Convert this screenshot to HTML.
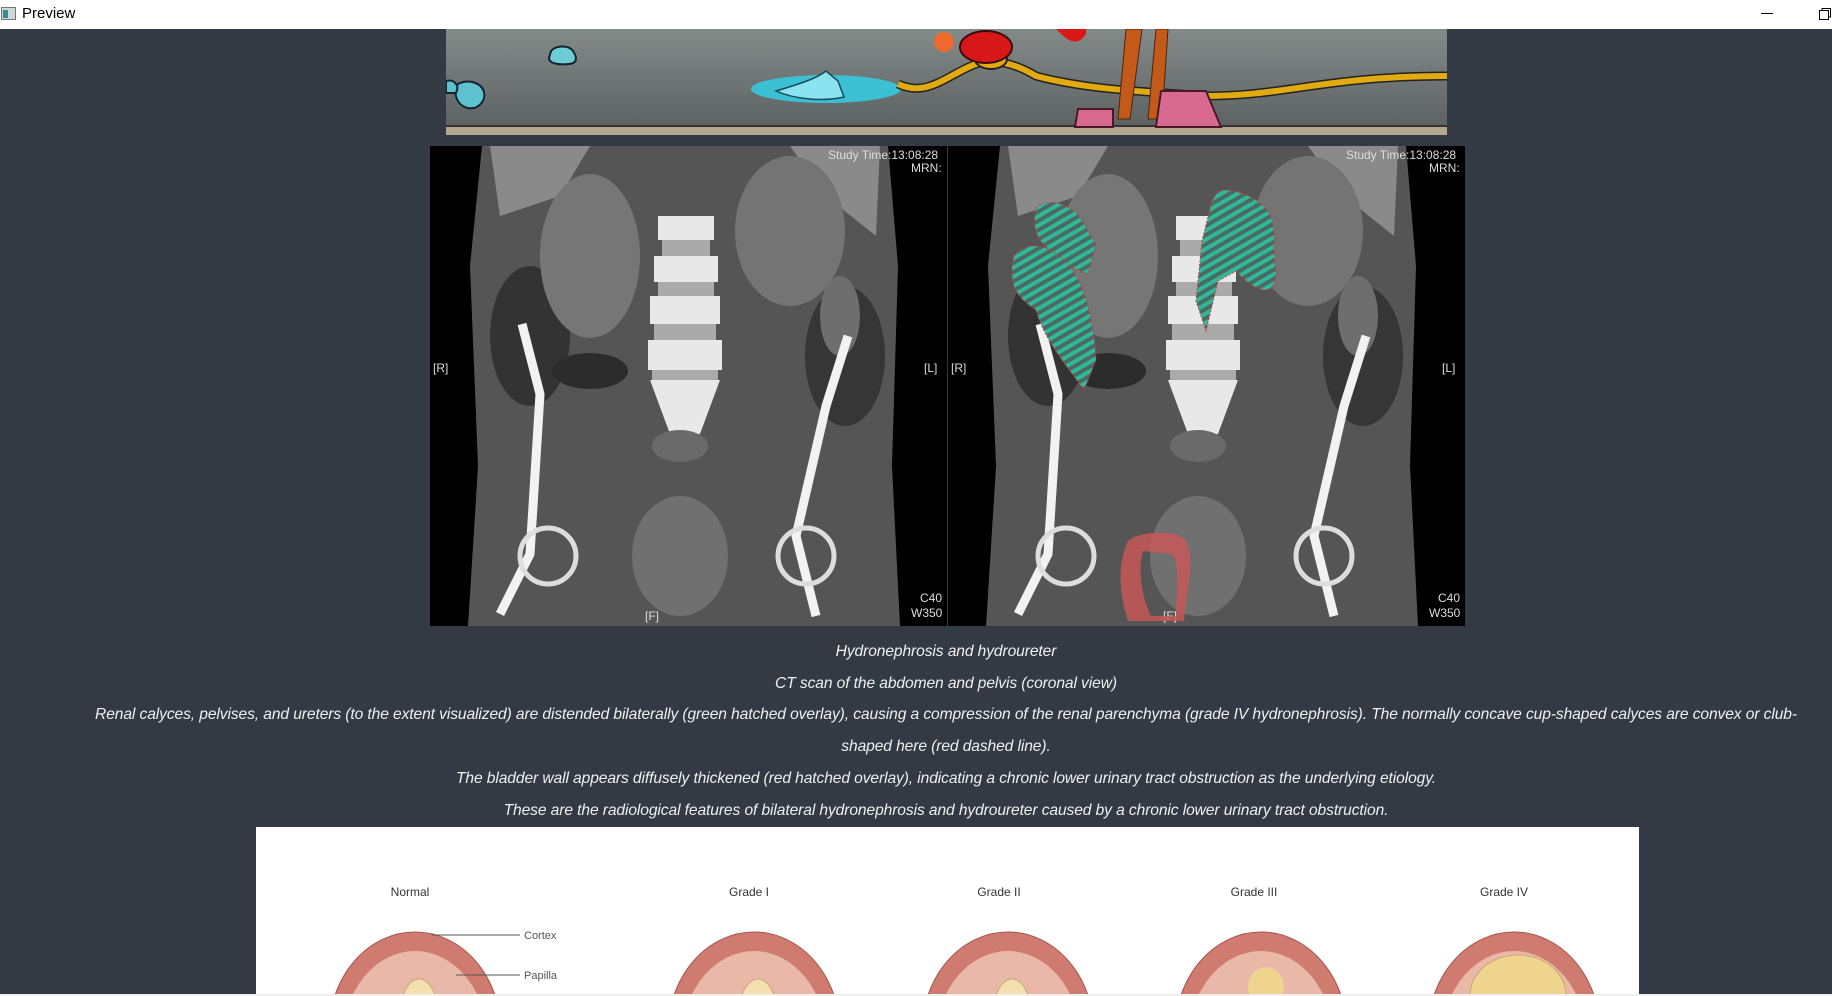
<!DOCTYPE html>
<html><head><meta charset="utf-8"><style>
*{margin:0;padding:0;box-sizing:border-box}
html,body{width:1832px;height:996px;overflow:hidden}
body{background:#343a43;font-family:"Liberation Sans",sans-serif;position:relative}
.tb{position:absolute;left:0;top:0;width:1832px;height:29px;background:#fff}
.tb .t{position:absolute;left:22px;top:5px;font-size:15px;color:#000}
.cap{position:absolute;left:60px;width:1772px;text-align:center;color:#eef0f2;font-style:italic;font-size:15.6px;letter-spacing:-0.1px;font-family:"Liberation Sans",sans-serif;white-space:nowrap;line-height:20px}
.ct{position:absolute;left:430px;top:146px}
.panel{position:absolute;left:256px;top:827px;width:1383px;height:167px;background:#fff;overflow:hidden}
.g{position:absolute;top:58px;font-size:12px;color:#333;transform:translateX(-50%)}
</style></head><body>
<div class="tb">
<svg style="position:absolute;left:1px;top:7px" width="16" height="14"><rect x="0.5" y="0.5" width="14" height="12" fill="#cfd8d8" stroke="#777"/><rect x="2" y="3" width="5" height="8" fill="#3a8a8a"/></svg>
<span class="t">Preview</span>
<div style="position:absolute;left:1761px;top:13px;width:12px;height:1px;background:#000"></div>
<svg style="position:absolute;left:1818px;top:7px" width="14" height="14"><rect x="1.5" y="3.5" width="9" height="9" fill="#fff" stroke="#000"/><path d="M4 3.5V1.5H12.5V10H10.5" fill="none" stroke="#000"/></svg>
</div>

<svg style="position:absolute;left:446px;top:29px" width="1001" height="106">
<defs><linearGradient id="bg" x1="0" y1="0" x2="0" y2="1"><stop offset="0" stop-color="#838b89"/><stop offset="1" stop-color="#5a5e5e"/></linearGradient></defs>
<rect width="1001" height="106" fill="url(#bg)"/>
<rect y="98" width="1001" height="8" fill="#b3a78e"/><rect y="96" width="1001" height="2" fill="#333"/>
<path d="M105 22c5-6 18-6 22 0s5 12-4 13-20 0-20-6z" fill="#6ccdd7" stroke="#123" stroke-width="2"/>
<path d="M12 55c12-6 24 0 26 8s-5 18-16 16-16-16-10-24z" fill="#5ec2ce" stroke="#123" stroke-width="2"/>
<path d="M0 52c8-2 14 4 10 12H0z" fill="#5ec2ce" stroke="#123" stroke-width="2"/>
<ellipse cx="380" cy="60" rx="75" ry="14" fill="#2fd4ec" opacity=".8"/>
<path d="M330 62c20-6 40-12 50-20l12 10 6 16c-22 5-50 2-68-6z" fill="#8ae4f0" stroke="#1a4a5a" stroke-width="1.5"/>
<path d="M452 55c30 14 50-10 78-20 20-6 40 0 60 12 60 16 130 16 170 20 80 0 120-20 241-20" fill="none" stroke="#222" stroke-width="9"/>
<path d="M452 55c30 14 50-10 78-20 20-6 40 0 60 12 60 16 130 16 170 20 80 0 120-20 241-20" fill="none" stroke="#e0aa10" stroke-width="6"/>
<ellipse cx="545" cy="30" rx="16" ry="10" fill="#e0aa10" stroke="#222" stroke-width="2"/>
<ellipse cx="540" cy="18" rx="26" ry="16" fill="#d81818" stroke="#3a0a0a" stroke-width="2"/>
<circle cx="498" cy="13" r="10" fill="#ee6a30"/>
<path d="M610 0c10 10 20 20 30 5V0z" fill="#d81818"/>
<path d="M680 0l-8 90h12l12-90zM710 0l-8 90h14l6-90z" fill="#c45a1a" stroke="#4a2410"/>
<path d="M760 62l15 36h-65l5-36z" fill="#d86a90" stroke="#4a1a2a" stroke-width="2"/>
<path d="M632 80h35v18h-38z" fill="#d86a90" stroke="#4a1a2a" stroke-width="2"/>
</svg>

<svg class="ct" width="1035" height="480" font-family="Liberation Sans" font-size="12" fill="#ddd">
<defs>
<pattern id="h" width="8" height="8" patternUnits="userSpaceOnUse" patternTransform="rotate(60)"><rect width="8" height="8" fill="#4a6a62"/><rect width="4" height="8" fill="#2fb89a"/></pattern>
<g id="half">
<rect width="517" height="480" fill="#000"/>
<path d="M52 0h406l10 120 -6 200 8 160H38l10-160 -8-200z" fill="#555"/>
<path d="M60 0h100l-30 50 -60 20zM360 0h90l-4 90-50-40z" fill="#8a8a8a"/>
<ellipse cx="100" cy="190" rx="40" ry="70" fill="#333"/><ellipse cx="415" cy="210" rx="40" ry="70" fill="#363636"/>
<ellipse cx="160" cy="110" rx="50" ry="82" fill="#767676"/>
<ellipse cx="360" cy="85" rx="55" ry="75" fill="#747474"/>
<ellipse cx="410" cy="170" rx="20" ry="40" fill="#6e6e6e"/>
<g fill="#e8e8e8"><rect x="228" y="70" width="56" height="24"/><rect x="224" y="110" width="64" height="26"/><rect x="220" y="150" width="70" height="28"/><rect x="218" y="194" width="74" height="30"/><path d="M220 234h70l-20 54h-30z"/></g>
<g fill="#aaa"><rect x="232" y="94" width="48" height="16"/><rect x="228" y="136" width="56" height="14"/><rect x="224" y="178" width="62" height="16"/><rect x="222" y="224" width="66" height="10"/></g>
<ellipse cx="160" cy="225" rx="38" ry="18" fill="#2c2c2c"/>
<g fill="none" stroke="#f2f2f2" stroke-width="9"><path d="M92 178l18 70 -10 160 -30 60"/><path d="M418 190l-22 70 -30 130 20 80"/></g>
<g fill="none" stroke="#ddd" stroke-width="5"><circle cx="118" cy="410" r="28"/><circle cx="376" cy="410" r="28"/></g>
<ellipse cx="250" cy="410" rx="48" ry="60" fill="#707070"/>
<ellipse cx="250" cy="300" rx="28" ry="16" fill="#6a6a6a"/>
<text x="398" y="13">Study Time:13:08:28</text><text x="481" y="26">MRN:</text>
<text x="3" y="226">[R]</text><text x="494" y="226">[L]</text>
<text x="490" y="456">C40</text><text x="481" y="471">W350</text><text x="215" y="474">[F]</text>
</g></defs>
<use href="#half"/><use href="#half" x="518"/>
<g transform="translate(518,0)">
<path d="M88 62c10-10 28-6 42 6l18 30-8 30-20-8c-14-16-40-22-32-58z" fill="url(#h)" stroke="#d33" stroke-dasharray="2 2"/>
<path d="M66 110c10-14 32-14 50 4 20 18 30 60 32 100l-12 30c-14-20-40-50-48-80-14-10-30-20-22-54z" fill="url(#h)" stroke="#d33" stroke-dasharray="2 2"/>
<path d="M270 45c14-4 40 6 50 20 10 14 4 40 8 60 0 30-22 20-40 0l-18 10-12 50-10 -30 6-60 10-40z" fill="url(#h)" stroke="#d33" stroke-dasharray="2 2"/>
<path d="M180 395c10-10 50-12 58 0 10 20 0 50-2 80h-56c-10-30-10-60 0-80zM195 405c-6 20 0 50 8 65h25c0-20 5-50-4-62z" fill="#c85858" fill-rule="evenodd" opacity=".85"/>
</g>
</svg>

<div class="cap" style="top:642px">Hydronephrosis and hydroureter</div>
<div class="cap" style="top:674px">CT scan of the abdomen and pelvis (coronal view)</div>
<div class="cap" style="top:705px">Renal calyces, pelvises, and ureters (to the extent visualized) are distended bilaterally (green hatched overlay), causing a compression of the renal parenchyma (grade IV hydronephrosis). The normally concave cup-shaped calyces are convex or club-</div>
<div class="cap" style="top:737px">shaped here (red dashed line).</div>
<div class="cap" style="top:769px">The bladder wall appears diffusely thickened (red hatched overlay), indicating a chronic lower urinary tract obstruction as the underlying etiology.</div>
<div class="cap" style="top:801px">These are the radiological features of bilateral hydronephrosis and hydroureter caused by a chronic lower urinary tract obstruction.</div>

<div class="panel">
<div class="g" style="left:154px">Normal</div><div class="g" style="left:493px">Grade I</div><div class="g" style="left:743px">Grade II</div><div class="g" style="left:998px">Grade III</div><div class="g" style="left:1248px">Grade IV</div>
<svg width="1383" height="167" style="position:absolute;left:0;top:0">
<defs><g id="k">
<ellipse cx="0" cy="108" rx="86" ry="100" fill="#cf7b70" stroke="#a55550"/>
<ellipse cx="0" cy="115" rx="72" ry="88" fill="#e9b8a8"/>
<ellipse cx="-38" cy="130" rx="22" ry="40" fill="#f4dfb0" stroke="#c9a870"/>
<ellipse cx="4" cy="95" rx="20" ry="40" fill="#f4dfb0" stroke="#c9a870"/>
<ellipse cx="38" cy="130" rx="18" ry="38" fill="#f4dfb0" stroke="#c9a870"/>
</g></defs>
<use href="#k" x="159" y="97"/><use href="#k" x="498" y="97"/><use href="#k" x="752" y="97"/><use href="#k" x="1005" y="97"/><use href="#k" x="1258" y="97"/>
<ellipse cx="1262" cy="168" rx="48" ry="40" fill="#efd48e" stroke="#c9a870"/>
<ellipse cx="1010" cy="160" rx="18" ry="20" fill="#efd48e"/>
<path d="M176 108h88M200 148h64" stroke="#555"/>
<text x="268" y="112" font-size="11" fill="#555" font-family="Liberation Sans">Cortex</text>
<text x="268" y="152" font-size="11" fill="#555" font-family="Liberation Sans">Papilla</text>
</svg>
</div>
<div style="position:absolute;left:0;top:994px;width:1832px;height:2px;background:#f0f0f0"></div>
</body></html>
